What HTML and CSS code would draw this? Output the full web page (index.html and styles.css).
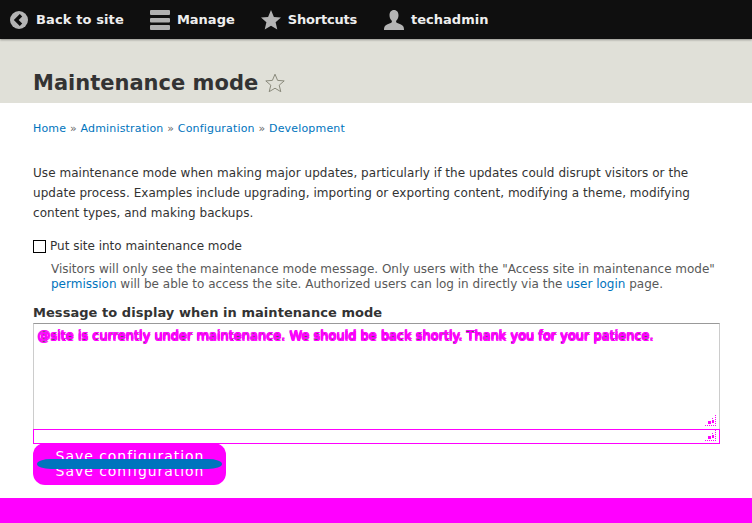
FILE: index.html
```
<!DOCTYPE html>
<html lang="en">
<head>
<meta charset="utf-8">
<title>Maintenance mode</title>
<link rel="stylesheet" href="styles.css">
</head>
<body>
<nav class="toolbar">
  <a class="tool tool-back"><svg class="ico" width="18" height="18" viewBox="0 0 18 18"><circle cx="9" cy="9" r="9" fill="#b4b4b4"/><path d="M11 4.2 6.2 9l4.8 4.8" fill="none" stroke="#0f0f0f" stroke-width="3.4"/></svg>Back to site</a>
  <a class="tool tool-manage"><svg class="ico" width="20" height="20" viewBox="0 0 20 20"><g fill="#b0b0b0"><rect x="0" y="0" width="20" height="5" rx="1"/><rect x="0" y="8" width="20" height="4.500" rx="1"/><rect x="0" y="15" width="20" height="5" rx="1"/></g></svg>Manage</a>
  <a class="tool tool-short"><svg class="ico" width="20" height="20" viewBox="0 0 20 20"><path d="M10 0l2.900 6.900 7.100.6-5.400 4.700 1.700 7.300L10 15.700 3.700 19.500l1.700-7.300L0 7.500l7.100-.6z" fill="#b4b4b4"/></svg>Shortcuts</a>
  <a class="tool tool-user"><svg class="ico" width="20" height="20" viewBox="0 0 20 20"><path d="M10 0c3 0 4.500 2.300 4.500 5.300 0 2.400-1 4.300-2.300 5.400-.4.900.1 1.900 1.100 2.400 2.400 1 5.300 1.700 6.200 3.600.3.700.5 2 .5 3.300H0c0-1.300.2-2.600.5-3.300.9-1.900 3.800-2.600 6.200-3.600 1-.5 1.500-1.500 1.100-2.400C6.500 9.600 5.500 7.700 5.500 5.300 5.500 2.300 7 0 10 0z" fill="#b4b4b4"/></svg>techadmin</a>
</nav>
<header class="page-head">
  <h1>Maintenance mode</h1>
  <svg class="title-star" width="20" height="20" viewBox="0 0 20 20"><path d="M10 1.200l2.600 6.200 6.600.5-5 4.300 1.600 6.500L10 15.200l-5.800 3.500 1.600-6.500-5-4.300 6.600-.5z" fill="none" stroke="#8a8a7c" stroke-width="1"/></svg>
</header>
<main class="content">
  <nav class="crumbs"><a>Home</a> » <a>Administration</a> » <a>Configuration</a> » <a>Development</a></nav>
  <p class="intro">Use maintenance mode when making major updates, particularly if the updates could disrupt visitors or the update process. Examples include upgrading, importing or exporting content, modifying a theme, modifying content types, and making backups.</p>
  <div class="check-row"><span class="check"></span><span>Put site into maintenance mode</span></div>
  <p class="desc">Visitors will only see the maintenance mode message. Only users with the "Access site in maintenance mode" <a>permission</a> will be able to access the site. Authorized users can log in directly via the <a>user login</a> page.</p>
  <div class="field-label">Message to display when in maintenance mode</div>
  <div class="area">
    <span class="msg">@site is currently under maintenance. We should be back shortly. Thank you for your patience.</span>
    <span class="msg msg-a">@site is currently under maintenance. We should be back shortly. Thank you for your patience.</span>
    <span class="msg msg-b">@site is currently under maintenance. We should be back shortly. Thank you for your patience.</span>
    <svg class="grip" width="11" height="11" viewBox="0 0 11 11" shape-rendering="crispEdges"><path d="M10 0h1v1h-1zM10 2h1v1h-1zM10 4h1v1h-1zM10 6h1v1h-1zM10 8h1v1h-1zM7 3h1v1H7zM7 5h2v3H7zM3 6h3v3H3zM0 10h1v1H0zM2 10h1v1H2zM4 10h1v1H4zM6 10h1v1H6zM8 10h1v1H8zM10 10h1v1h-1z" fill="#f0f"/></svg>
  </div>
  <div class="area-ghost">
    <svg class="grip" width="11" height="11" viewBox="0 0 11 11" shape-rendering="crispEdges"><path d="M10 0h1v1h-1zM10 2h1v1h-1zM10 4h1v1h-1zM10 6h1v1h-1zM10 8h1v1h-1zM7 3h1v1H7zM7 5h2v3H7zM3 6h3v3H3zM0 10h1v1H0zM2 10h1v1H2zM4 10h1v1H4zM6 10h1v1H6zM8 10h1v1H8zM10 10h1v1h-1z" fill="#f0f"/></svg>
  </div>
  <div class="save">
    <span class="save-text">Save configuration</span>
    <span class="save-text">Save configuration</span>
    <span class="save-bar"></span>
  </div>
</main>
<footer class="foot"></footer>
</body>
</html>
```
FILE: styles.css
```
* { box-sizing: border-box; }
html, body { margin: 0; padding: 0; }
body { width: 752px; height: 523px; overflow: hidden; background: #fff; color: #333; font: 13px/20px "DejaVu Sans", sans-serif; display: flex; flex-direction: column; }
a { color: #0074bd; }
.toolbar { height: 39px; background: #0f0f0f; display: flex; align-items: center; box-shadow: 0 1px 2px rgba(0,0,0,.35); position: relative; font-weight: bold; color: #eee; }
.tool { color: #eee; display: flex; align-items: center; }
.tool-back { margin-left: 10px; letter-spacing: .12px; }
.tool-back .ico { margin-right: 8px; }
.tool-manage { margin-left: 26px; }
.tool-manage .ico { margin-right: 7px; }
.tool-short { margin-left: 26px; letter-spacing: -.2px; }
.tool-short .ico { margin-right: 7px; }
.tool-user { margin-left: 27px; }
.tool-user .ico { margin-right: 7px; }
.page-head { height: 64px; background: #e0e0d8; padding: 30px 0 0 33px; display: flex; align-items: flex-start; }
h1 { margin: 0; font-size: 21px; line-height: 28px; font-weight: bold; color: #333; }
.title-star { margin: 4px 0 0 7px; }
.content { flex: 1; padding: 16px 32px 0 33px; }
.crumbs { font-size: 11px; letter-spacing: .18px; line-height: 20px; color: #666; }
.intro { margin: 24px 0 0; font-size: 12px; letter-spacing: .05px; }
.check-row { display: flex; align-items: center; margin-top: 13px; font-size: 12px; }
.check { width: 13px; height: 13px; border: 1px solid #000; margin-right: 4px; background: #fff; }
.desc { margin: 6px 0 0 18px; font-size: 12px; line-height: 15px; color: #595959; }
.field-label { margin-top: 11px; font-weight: bold; line-height: 20px; letter-spacing: .05px; }
.area { position: relative; width: 687px; height: 107px; border: 1px solid #ccc; border-top-color: #999; }
.msg { position: absolute; left: 3px; top: 3px; white-space: nowrap; color: #555; font-size: 13px; line-height: 18px; letter-spacing: -.03px; }
.msg-a { color: #f0f; top: 2px; text-shadow: 1px 0 #f0f; }
.msg-b { color: #f0f; top: 4px; text-shadow: 1px 0 #f0f; }
.grip { position: absolute; right: 3px; bottom: 3px; }
.area-ghost { position: relative; width: 687px; height: 15px; margin-top: -1px; border: 1px solid #f0f; }
.area-ghost .grip { bottom: 2px; }
.save { position: relative; width: 193px; height: 42px; margin-top: -1px; background: #f0f; border-radius: 12px; display: flex; flex-direction: column; align-items: center; padding: 6px 0 0 1px; color: #fff; font-size: 14px; letter-spacing: .95px; }
.save-text { height: 15px; line-height: 15px; }
.save-bar { position: absolute; left: 4px; right: 4px; top: 16px; height: 10px; background: #0074bd; border-radius: 14px / 5px; }
.foot { height: 25px; background: #f0f; }
```
